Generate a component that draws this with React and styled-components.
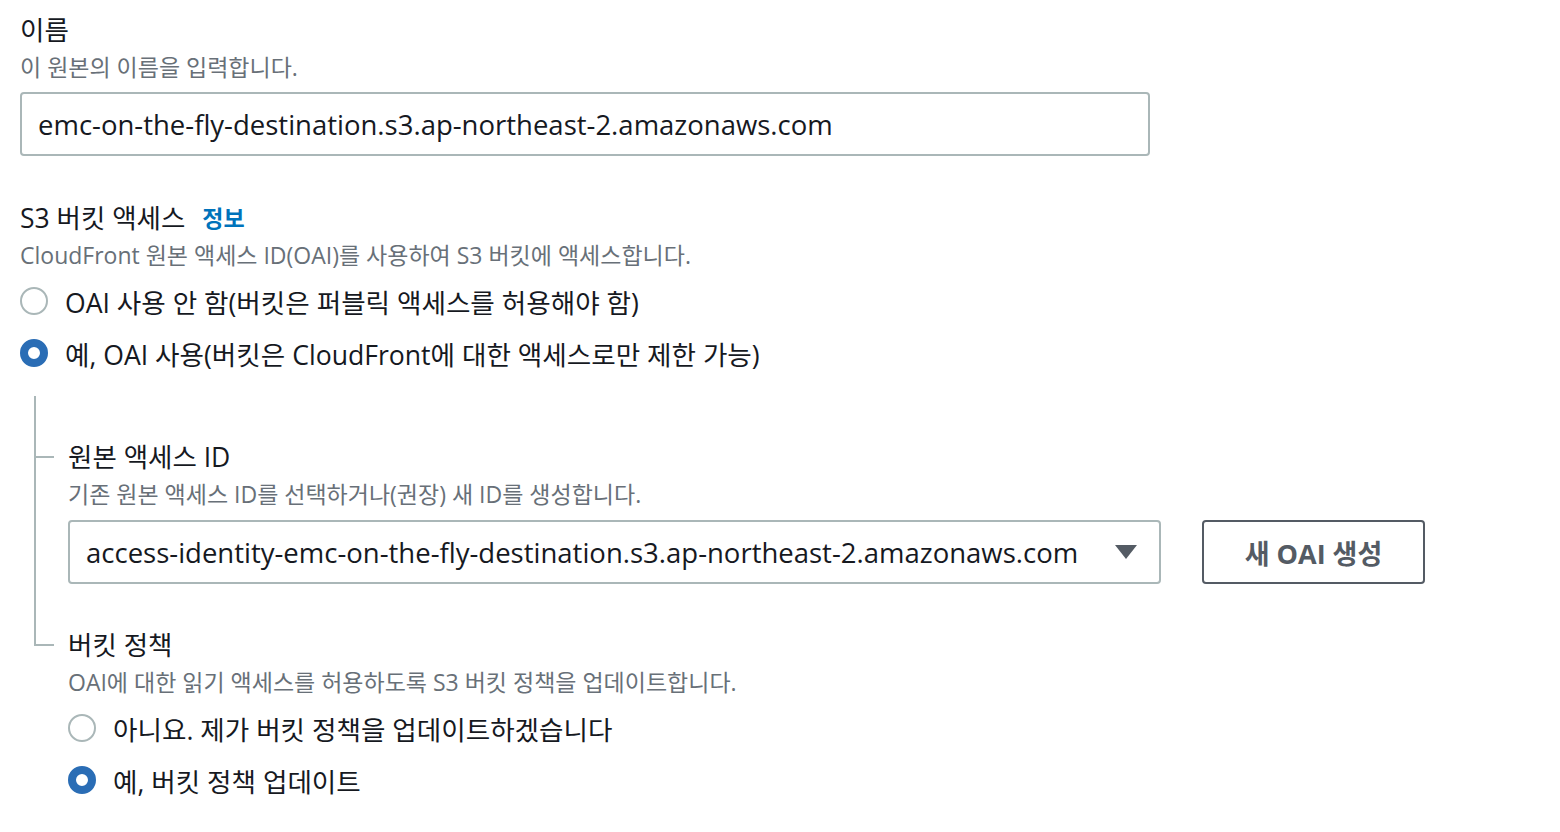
import React from 'react';
import styled, { createGlobalStyle } from 'styled-components';

const Global = createGlobalStyle`
  body {
    margin: 0;
    background: #fff;
    font-family: "Open Sans", "Noto Sans CJK KR", sans-serif;
    color: #16191f;
  }
`;

const Page = styled.div`
  padding: 13px 20px 0 20px;
  width: 1540px;
  box-sizing: border-box;
`;

const Field = styled.div`
  display: flex;
  flex-direction: column;
  margin-bottom: ${p => p.gap || 0}px;
`;

const Label = styled.div`
  font-size: 26.5px;
  line-height: 34px;
  color: #16191f;
  display: flex;
  align-items: center;
  gap: 17px;
  white-space: nowrap;
`;

const InfoLink = styled.span`
  color: #0073bb;
  font-weight: 700;
  font-size: 23px;
`;

const Desc = styled.div`
  font-size: 23px;
  line-height: 40px;
  color: #687078;
  white-space: nowrap;
`;

const Input = styled.div`
  margin-top: ${p => p.mt || 5}px;
  width: ${p => p.width}px;
  height: 64px;
  box-sizing: border-box;
  border: 2px solid #aab7b8;
  border-radius: 4px;
  padding: 0 16px;
  display: flex;
  align-items: center;
  justify-content: space-between;
  font-size: 27.5px;
  color: #16191f;
  white-space: nowrap;
`;

const Caret = styled.span`
  width: 0;
  height: 0;
  border-left: 11px solid transparent;
  border-right: 11px solid transparent;
  border-top: 14px solid #545b64;
  margin-right: 6px;
`;

const RadioRow = styled.div`
  display: flex;
  align-items: center;
  gap: 17px;
  height: 52px;
  font-size: 26.6px;
  white-space: nowrap;
`;

const Radio = styled.span`
  width: 28px;
  height: 28px;
  box-sizing: border-box;
  border-radius: 50%;
  flex-shrink: 0;
  border: ${p => (p.checked ? '8px solid #2a6db5' : '2px solid #aab7b8')};
  background: #fff;
`;

const Nested = styled.div`
  display: flex;
  margin-top: 17px;
  margin-left: 14px;
`;

const Rail = styled.div`
  width: 2px;
  background: #aab7b8;
  height: 250px;
  flex-shrink: 0;
`;

const Branches = styled.div`
  display: flex;
  flex-direction: column;
  padding-top: 44px;
`;

const Branch = styled.div`
  display: flex;
  align-items: flex-start;
`;

const Tick = styled.div`
  width: 18px;
  height: 2px;
  background: #aab7b8;
  margin-top: 16px;
  margin-right: 14px;
  flex-shrink: 0;
`;

const Row = styled.div`
  display: flex;
  gap: 41px;
`;

const Button = styled.div`
  margin-top: 6px;
  width: 223px;
  height: 64px;
  box-sizing: border-box;
  border: 2px solid #545b64;
  border-radius: 4px;
  display: flex;
  align-items: center;
  justify-content: center;
  font-weight: 700;
  font-size: 27px;
  color: #545b64;
`;

export default function App() {
  return (
    <Page>
      <Global />
      <Field gap={45}>
        <Label>이름</Label>
        <Desc>이 원본의 이름을 입력합니다.</Desc>
        <Input width={1130}>emc-on-the-fly-destination.s3.ap-northeast-2.amazonaws.com</Input>
      </Field>

      <Field>
        <Label>S3 버킷 액세스 <InfoLink>정보</InfoLink></Label>
        <Desc>CloudFront 원본 액세스 ID(OAI)를 사용하여 S3 버킷에 액세스합니다.</Desc>
        <RadioRow><Radio />OAI 사용 안 함(버킷은 퍼블릭 액세스를 허용해야 함)</RadioRow>
        <RadioRow><Radio checked />예, OAI 사용(버킷은 CloudFront에 대한 액세스로만 제한 가능)</RadioRow>
      </Field>

      <Nested>
        <Rail />
        <Branches>
          <Branch>
            <Tick />
            <Field gap={44}>
              <Label>원본 액세스 ID</Label>
              <Desc>기존 원본 액세스 ID를 선택하거나(권장) 새 ID를 생성합니다.</Desc>
              <Row>
                <Input width={1093} mt={6}>
                  access-identity-emc-on-the-fly-destination.s3.ap-northeast-2.amazonaws.com
                  <Caret />
                </Input>
                <Button>새 OAI 생성</Button>
              </Row>
            </Field>
          </Branch>
          <Branch>
            <Tick />
            <Field>
              <Label>버킷 정책</Label>
              <Desc>OAI에 대한 읽기 액세스를 허용하도록 S3 버킷 정책을 업데이트합니다.</Desc>
              <RadioRow><Radio />아니요. 제가 버킷 정책을 업데이트하겠습니다</RadioRow>
              <RadioRow><Radio checked />예, 버킷 정책 업데이트</RadioRow>
            </Field>
          </Branch>
        </Branches>
      </Nested>
    </Page>
  );
}
